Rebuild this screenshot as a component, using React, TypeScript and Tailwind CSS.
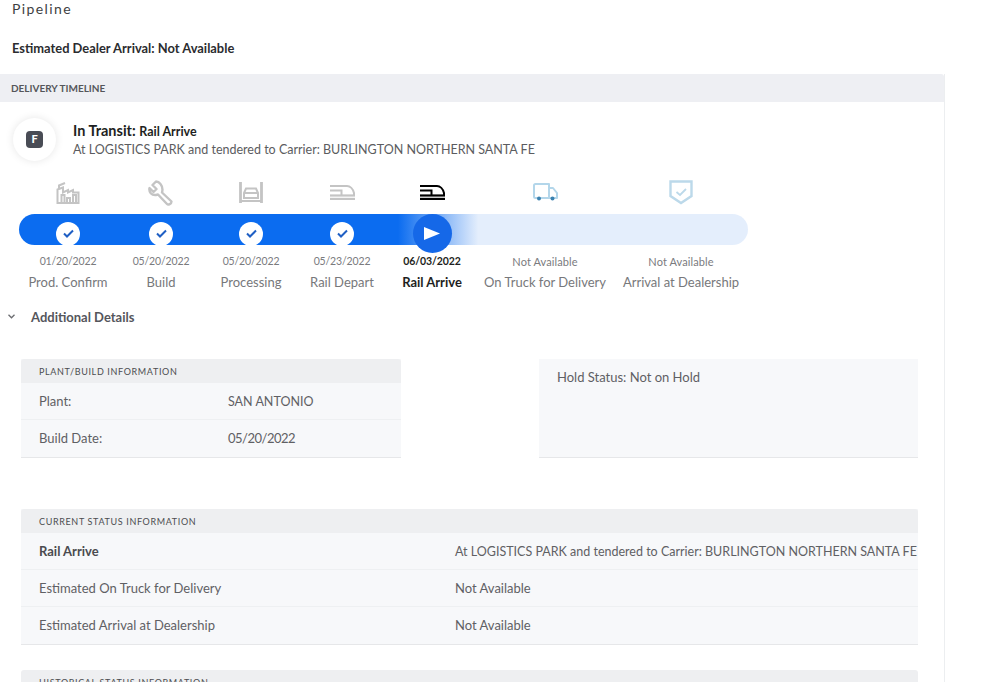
import React from "react";

const F = { fontFamily: '"Lato", "Noto Sans", sans-serif' };

function Factory() {
  return (
    <svg width="24" height="22" viewBox="0 0 24 22" fill="none" stroke="currentColor" strokeWidth="2">
      <path d="M1.500 21V7.500L7 5.500V10.500L12 8v2.500L17 8v2.500h5.500V21z" />
      <path d="M3 7V3.500L9 1" />
      <path d="M5.500 21v-8h3v8M11 21v-5h3v5M17 21v-8h3v8" />
    </svg>
  );
}
function Wrench() {
  return (
    <svg width="26" height="26" viewBox="0 0 26 26" fill="none" stroke="currentColor" strokeWidth="2.400" strokeLinejoin="round">
      <path d="M8 1.500l-3.500 3.500 4 4-3 3-4-4C.7 12 3.500 15.500 8 15l2-.5 9 9.500c1.200 1.200 4.500 0 4.500-2.500L14 12.500c1-3.500.5-6-1.500-8.500C11 2 9.500 1.500 8 1.500z" />
    </svg>
  );
}
function Processing() {
  return (
    <svg width="24" height="22" viewBox="0 0 24 22" fill="none" stroke="currentColor" strokeWidth="2">
      <path d="M1.500 0v21M22.500 0v21" strokeWidth="2.800" />
      <path d="M1.500 19h21" />
      <path d="M5 16v-5l2-4.500h10l2 4.500v5zM5 11h14" />
    </svg>
  );
}
function Rail() {
  return (
    <svg width="25" height="15" viewBox="0 0 25 15" fill="none" stroke="currentColor">
      <path d="M0 1h17c3 0 6 3 7 7v2.500" strokeWidth="2" />
      <path d="M0 5.500h11.500v4.500" strokeWidth="2" />
      <path d="M0 10.500h25" strokeWidth="2.200" />
      <path d="M0 14h25" strokeWidth="2.400" />
    </svg>
  );
}
function Truck() {
  return (
    <svg width="25" height="19" viewBox="0 0 25 19" fill="none">
      <path d="M2.500 1h13.500v14H2.500A1.500 1.500 0 0 1 1 13.500v-11A1.500 1.500 0 0 1 2.500 1zM16 5h4l4 5v5h-8z" stroke="#b3d6ea" strokeWidth="2" strokeLinejoin="round" />
      <circle cx="6" cy="15.500" r="2" fill="#3b82b0" />
      <circle cx="19.500" cy="15.500" r="2" fill="#3b82b0" />
    </svg>
  );
}
function Shield() {
  return (
    <svg width="24" height="25" viewBox="0 0 24 25" fill="none" stroke="#bcd9ea" strokeWidth="2.400">
      <path d="M1.500 1.500h21v14.500L12 23 1.500 16z" />
      <path d="M7.500 12l3.500 3 6-6" strokeWidth="1.800" />
    </svg>
  );
}
function Check() {
  return (
    <div className="flex h-6 w-6 items-center justify-center rounded-full bg-white">
      <svg width="11" height="9" viewBox="0 0 11 9" fill="none" stroke="#1f5fc4" strokeWidth="2">
        <path d="M1 4.500l3 3 6-6" />
      </svg>
    </div>
  );
}

const steps = [
  { date: "01/20/2022", label: "Prod. Confirm", icon: <Factory />, color: "text-[#c4c4c4]" },
  { date: "05/20/2022", label: "Build", icon: <Wrench />, color: "text-[#c4c4c4]" },
  { date: "05/20/2022", label: "Processing", icon: <Processing />, color: "text-[#c4c4c4]" },
  { date: "05/23/2022", label: "Rail Depart", icon: <Rail />, color: "text-[#c4c4c4]" },
  { date: "06/03/2022", label: "Rail Arrive", icon: <Rail />, color: "text-black", current: true },
  { date: "Not Available", label: "On Truck for Delivery", icon: <Truck />, color: "", future: true },
  { date: "Not Available", label: "Arrival at Dealership", icon: <Shield />, color: "", future: true },
];

const GRID = "grid grid-cols-[98px_88px_92px_90px_90px_136px_136px]";

function Row({ left, right, bold, cols, last, rightClass }: { left: string; right: string; bold?: boolean; cols: string; last?: boolean; rightClass?: string }) {
  return (
    <div className={`flex h-[37px] items-center whitespace-nowrap overflow-hidden pl-[18px] text-[13px] text-[#5f6064] ${last ? "" : "border-b border-[#eef0f2] pt-[2px]"}`}>
      <div className={`${cols} shrink-0 ${bold ? "font-bold text-[#4a4b4f]" : ""}`}>{left}</div>
      <div className={rightClass}>{right}</div>
    </div>
  );
}

function SectionHead({ text }: { text: string }) {
  return (
    <div className="flex h-6 items-center rounded-t-[3px] bg-[#eeeff1] pl-[18px] pt-[2px] text-[9px] tracking-[0.65px] text-[#4c4d50]">
      {text}
    </div>
  );
}

export default function App() {
  return (
    <div style={F} className="h-[682px] w-[989px] overflow-hidden bg-white text-[#58595b]">
      <div className="pl-3 text-[14px] leading-[18px] tracking-[1.4px] text-[#3e3f42]">Pipeline</div>
      <div className="mt-[21px] pl-3 text-[12.900px] leading-[18px] font-bold text-[#2b2c2f]">Estimated Dealer Arrival: Not Available</div>
      <div className="mt-[17px] w-[945px] border-r border-[#eceef0]">
        <div className="flex h-7 items-center rounded-tr-[3px] bg-[#eeeff3] pl-[11px] pt-px text-[10px] font-bold text-[#55565a]">DELIVERY TIMELINE</div>

        <div className="flex items-center gap-[17px] pl-[13px] pt-4">
          <div className="flex h-[43px] w-[43px] items-center justify-center rounded-full bg-white shadow-[0_0_8px_rgba(0,0,0,0.10)]">
            <div className="flex h-[17px] w-[17px] items-center justify-center rounded-[4px] bg-[#494c55] text-[11px] font-black text-white">F</div>
          </div>
          <div>
            <div className="text-[14.500px] leading-[19px] font-bold text-[#1e1f22]">
              In Transit: <span className="text-[12.500px]">Rail Arrive</span>
            </div>
            <div className="text-[12.500px] leading-[18px] text-[#5b5c60]">At LOGISTICS PARK and tendered to Carrier: BURLINGTON NORTHERN SANTA FE</div>
          </div>
        </div>

        <div className="pl-[19px]">
          <div className={`${GRID} mt-[10px] h-[43px]`}>
            {steps.map((s, i) => (
              <div key={i} className={`flex items-center justify-center ${s.color}`}>{s.icon}</div>
            ))}
          </div>
          <div className={`${GRID} h-[31px] w-[729px] rounded-full bg-[linear-gradient(90deg,#0b6cf0_0%,#0b6cf0_52%,#e4eefc_63%,#e4eefc_100%)]`}>
            {steps.map((s, i) => (
              <div key={i} className="flex items-center justify-center">
                {s.future ? null : s.current ? (
                  <div className="flex h-[39px] w-[39px] shrink-0 items-center justify-center rounded-full bg-[#1568e8]">
                    <svg width="16" height="13" viewBox="0 0 16 13"><path d="M0 0l16 6.500L0 13z" fill="#fff" /></svg>
                  </div>
                ) : (
                  <Check />
                )}
              </div>
            ))}
          </div>
          <div className={`${GRID} mt-[9px]`}>
            {steps.map((s, i) => (
              <div key={i} className="flex flex-col items-center whitespace-nowrap">
                <div className={`leading-[15px] ${s.future ? "text-[11px] tracking-[0.1px] text-[#7a7b7e]" : s.current ? "text-[10.500px] tracking-[-0.1px] font-bold text-[#1e1f22]" : "text-[10.500px] tracking-[-0.15px] text-[#7a7b7e]"}`}>{s.date}</div>
                <div className={`mt-1 text-[13px] leading-[18px] ${s.current ? "font-bold text-[#1e1f22]" : "text-[#77787b]"}`}>{s.label}</div>
              </div>
            ))}
          </div>
        </div>

        <div className="mt-[18px] flex h-[18px] items-center pl-[8px] text-[13px] font-bold text-[#55565c]">
          <svg width="7" height="5" viewBox="0 0 7 5" fill="none" stroke="#6b6c70" strokeWidth="1.300" className="-mt-1"><path d="M.5 .8L3.500 3.800 6.500 .8" /></svg>
          <span className="ml-4">Additional Details</span>
        </div>

        <div className="mt-[32px] flex items-start justify-between pl-[21px] pr-[26px]">
          <div className="w-[380px] bg-[#f7f8fa] shadow-[0_1px_0_#e6e7e9]">
            <SectionHead text="PLANT/BUILD INFORMATION" />
            <Row left="Plant:" right="SAN ANTONIO" cols="w-[189px]" rightClass="text-[12.500px]" />
            <Row left="Build Date:" right="05/20/2022" cols="w-[189px]" rightClass="tracking-[-0.5px]" last />
          </div>
          <div className="h-[98px] w-[379px] bg-[#f7f8fa] pl-[18px] pt-[9px] text-[13px] leading-[18px] text-[#5f6064] shadow-[0_1px_0_#e6e7e9]">Hold Status: Not on Hold</div>
        </div>

        <div className="ml-[21px] mr-[26px] mt-[52px]">
          <div className="bg-[#f7f8fa] shadow-[0_1px_0_#e6e7e9]">
            <SectionHead text="CURRENT STATUS INFORMATION" />
            <Row left="Rail Arrive" right="At LOGISTICS PARK and tendered to Carrier: BURLINGTON NORTHERN SANTA FE" bold cols="w-[416px]" rightClass="text-[12.500px]" />
            <Row left="Estimated On Truck for Delivery" right="Not Available" cols="w-[416px]" />
            <Row left="Estimated Arrival at Dealership" right="Not Available" cols="w-[416px]" last />
          </div>
          <div className="mt-[26px]">
            <SectionHead text="HISTORICAL STATUS INFORMATION" />
          </div>
        </div>
      </div>
    </div>
  );
}
